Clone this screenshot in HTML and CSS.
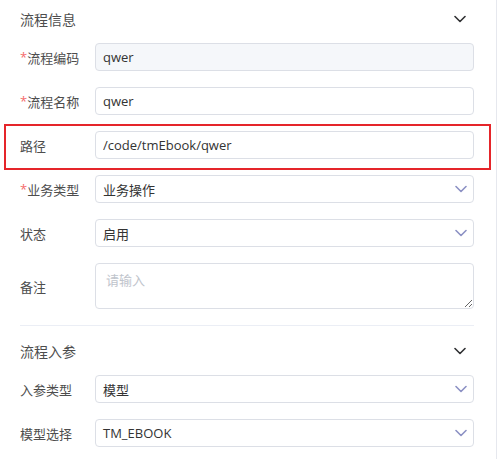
FILE: index.html
```html
<!DOCTYPE html>
<html lang="zh-CN">

<head>
    <meta charset="UTF-8">
    <meta name="viewport" content="width=device-width, initial-scale=1.0">
    <title>流程信息</title>
    <link rel="stylesheet" href="styles.css">
</head>

<body>
    <div class="panel">
        <section class="section">
            <div class="section-header">
                <span class="section-title">流程信息</span>
                <svg class="collapse-icon" viewBox="0 0 12 8" width="12" height="8">
                    <path d="M1 1.5 L6 6.5 L11 1.5" />
                </svg>
            </div>
            <div class="section-body">
                <div class="form-row">
                    <label class="form-label required">流程编码</label>
                    <input class="form-input is-disabled" type="text" value="qwer" disabled>
                </div>
                <div class="form-row">
                    <label class="form-label required">流程名称</label>
                    <input class="form-input" type="text" value="qwer">
                </div>
                <div class="form-row highlight">
                    <label class="form-label">路径</label>
                    <input class="form-input" type="text" value="/code/tmEbook/qwer">
                </div>
                <div class="form-row">
                    <label class="form-label required">业务类型</label>
                    <div class="form-select">
                        <span>业务操作</span>
                        <svg class="select-arrow" viewBox="0 0 12 8" width="12" height="8">
                            <path d="M1 1.5 L6 6.5 L11 1.5" />
                        </svg>
                    </div>
                </div>
                <div class="form-row">
                    <label class="form-label">状态</label>
                    <div class="form-select">
                        <span>启用</span>
                        <svg class="select-arrow" viewBox="0 0 12 8" width="12" height="8">
                            <path d="M1 1.5 L6 6.5 L11 1.5" />
                        </svg>
                    </div>
                </div>
                <div class="form-row">
                    <label class="form-label">备注</label>
                    <textarea class="form-textarea" placeholder="请输入"></textarea>
                </div>
            </div>
        </section>

        <div class="divider"></div>

        <section class="section">
            <div class="section-header">
                <span class="section-title">流程入参</span>
                <svg class="collapse-icon" viewBox="0 0 12 8" width="12" height="8">
                    <path d="M1 1.5 L6 6.5 L11 1.5" />
                </svg>
            </div>
            <div class="section-body">
                <div class="form-row">
                    <label class="form-label">入参类型</label>
                    <div class="form-select">
                        <span>模型</span>
                        <svg class="select-arrow" viewBox="0 0 12 8" width="12" height="8">
                            <path d="M1 1.5 L6 6.5 L11 1.5" />
                        </svg>
                    </div>
                </div>
                <div class="form-row">
                    <label class="form-label">模型选择</label>
                    <div class="form-select">
                        <span>TM_EBOOK</span>
                        <svg class="select-arrow" viewBox="0 0 12 8" width="12" height="8">
                            <path d="M1 1.5 L6 6.5 L11 1.5" />
                        </svg>
                    </div>
                </div>
            </div>
        </section>
    </div>
</body>

</html>
```

FILE: styles.css
```css
* {
    margin: 0;
    padding: 0;
    box-sizing: border-box;
    font-family: 'Open Sans', 'Noto Sans CJK SC', sans-serif;
}

:root {
    --text-primary: #333333;
    --text-label: #4d4d4d;
    --text-placeholder: #c0c4cc;
    --border-color: #dcdfe6;
    --disabled-bg: #f5f7fa;
    --divider-color: #ebeef5;
    --arrow-color: #8c91c4;
    --required-color: #f56c6c;
    --highlight-color: #e5252a;
}

body {
    background-color: #ffffff;
    color: var(--text-primary);
    overflow: hidden;
}

.panel {
    width: 497px;
    min-height: 459px;
    padding-left: 20px;
    padding-right: 22px;
    border-right: 1px solid #e6e8ee;
}

.section-header {
    height: 38px;
    display: flex;
    align-items: center;
    justify-content: space-between;
    padding-right: 8px;
}

.section-title {
    font-size: 14px;
    color: var(--text-label);
}

.collapse-icon path,
.select-arrow path {
    fill: none;
    stroke-width: 1.6;
    stroke-linecap: round;
    stroke-linejoin: round;
}

.collapse-icon path {
    stroke: #303133;
}

.section-body {
    padding-top: 5px;
    display: flex;
    flex-direction: column;
    gap: 16px;
}

.form-row {
    display: flex;
    align-items: center;
    position: relative;
}

/* red frame drawn around the path row */
.form-row.highlight::after {
    content: "";
    position: absolute;
    left: -16px;
    right: -17px;
    top: -7px;
    bottom: -11px;
    border: 2px solid var(--highlight-color);
    pointer-events: none;
}

.form-label {
    width: 75px;
    flex-shrink: 0;
    font-size: 13px;
    color: var(--text-label);
}

.form-label.required::before {
    content: "*";
    color: var(--required-color);
    font-size: 13px;
    position: relative;
    top: -1px;
}

.form-input,
.form-select {
    flex: 1;
    height: 28px;
    border: 1px solid var(--border-color);
    border-radius: 4px;
    padding: 0 7px;
    font-size: 13px;
    color: var(--text-primary);
    background-color: #ffffff;
    outline: none;
}

.form-input.is-disabled {
    background-color: var(--disabled-bg);
    color: var(--text-primary);
    -webkit-text-fill-color: var(--text-primary);
    opacity: 1;
}

.form-select {
    display: flex;
    align-items: center;
    justify-content: space-between;
    padding-right: 6px;
}

.select-arrow path {
    stroke: var(--arrow-color);
}

.form-textarea {
    flex: 1;
    height: 46px;
    border: 1px solid var(--border-color);
    border-radius: 4px;
    padding: 6px 10px;
    font-size: 13px;
    line-height: 20px;
    color: var(--text-primary);
    resize: vertical;
    outline: none;
}

.form-textarea::placeholder {
    color: var(--text-placeholder);
}

.divider {
    height: 1px;
    background-color: var(--divider-color);
    margin: 16px 0 6px;
    margin-right: 0;
}
```
